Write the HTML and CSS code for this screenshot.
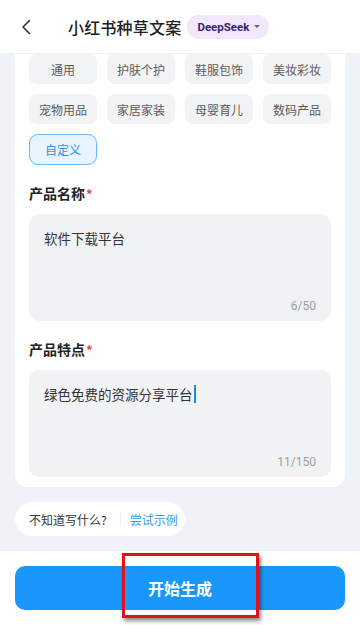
FILE: index.html
```html
<!DOCTYPE html>
<html lang="zh">
<head>
<meta charset="utf-8">
<link rel="stylesheet" href="styles.css">
</head>
<body>
<div class="app">
  <header class="topbar">
    <svg class="back" width="12" height="16" viewBox="0 0 12 16"><path d="M9.5 1.5 L3 8 L9.5 14.5" fill="none" stroke="#333" stroke-width="1.6" stroke-linecap="round" stroke-linejoin="round"/></svg>
    <h1 class="title">小红书种草文案</h1>
    <div class="badge">DeepSeek <span class="caret"></span></div>
  </header>
  <main class="content">
    <section class="card">
      <div class="chips">
        <div class="chip">通用</div>
        <div class="chip">护肤个护</div>
        <div class="chip">鞋服包饰</div>
        <div class="chip">美妆彩妆</div>
        <div class="chip">宠物用品</div>
        <div class="chip">家居家装</div>
        <div class="chip">母婴育儿</div>
        <div class="chip">数码产品</div>
        <div class="chip chip-active">自定义</div>
      </div>
      <div class="label">产品名称<span class="req">*</span></div>
      <div class="field">
        <div class="field-text">软件下载平台</div>
        <div class="count">6/50</div>
      </div>
      <div class="label">产品特点<span class="req">*</span></div>
      <div class="field">
        <div class="field-text">绿色免费的资源分享平台<span class="cursor"></span></div>
        <div class="count">11/150</div>
      </div>
    </section>
    <div class="hint">
      <span class="hint-q">不知道写什么?</span>
      <span class="hint-sep"></span>
      <span class="hint-link">尝试示例</span>
    </div>
  </main>
  <footer class="bottom">
    <button class="go">开始生成</button>
    <div class="mark"></div>
  </footer>
</div>
</body>
</html>
```
FILE: styles.css
```css
* { box-sizing: border-box; }
html, body { margin: 0; padding: 0; }
body {
  font-family: "Noto Sans CJK SC", "Noto Sans", Roboto, sans-serif;
  background: #fff;
  width: 360px;
  height: 625px;
  overflow: hidden;
}
.app { width: 360px; height: 625px; display: flex; flex-direction: column; }
.topbar {
  height: 53px;
  flex: none;
  display: flex;
  align-items: center;
  background: #fff;
  padding-left: 20px;
}
.title {
  margin: 0 0 0 36px;
  font-size: 16px;
  font-weight: 500;
  color: #222;
  letter-spacing: 0.2px;
}
.badge {
  margin-left: 6px;
  height: 24px;
  padding: 0 9px 0 10px;
  border-radius: 12px;
  background: #f1e8fc;
  color: #3b2170;
  font-family: Roboto, "Noto Sans", sans-serif;
  font-weight: 700;
  font-size: 11.5px;
  display: flex;
  align-items: center;
  gap: 5px;
}
.caret {
  width: 0; height: 0;
  border-left: 3px solid transparent;
  border-right: 3px solid transparent;
  border-top: 3.5px solid #6b5a8c;
}
.content {
  flex: none;
  height: 498px;
  background: #eff2f6;
  padding: 1px 15px 0;
  overflow: hidden;
}
.card {
  background: #fff;
  border-radius: 0 0 12px 12px;
  padding: 0 14px 10px;
}
.chips {
  display: grid;
  grid-template-columns: repeat(4, 68px);
  column-gap: 10px;
  row-gap: 10px;
}
.chip {
  height: 30px;
  border-radius: 8px;
  background: #f2f3f5;
  color: #5a5a5a;
  font-size: 12px;
  display: flex;
  align-items: center;
  justify-content: center;
}
.chip-active {
  height: 31px;
  background: #e8f4ff;
  border: 1px solid #6ab6f6;
  color: #2b90ea;
  border-radius: 9px;
}
.label {
  margin-top: 17px;
  font-size: 14px;
  font-weight: 700;
  color: #222;
  line-height: 22px;
}
.req { color: #e8424a; margin-left: 1px; font-size: 13px; }
.field {
  margin-top: 9px;
  height: 107px;
  background: #f1f2f4;
  border-radius: 10px;
  padding: 13px 15px 8px;
  display: flex;
  flex-direction: column;
  justify-content: space-between;
}
.field + .label { margin-top: 17px; }
.field-text {
  font-size: 13.5px;
  color: #333;
  line-height: 22px;
  display: flex;
  align-items: center;
}
.cursor {
  display: inline-block;
  width: 2px;
  height: 18px;
  background: #1e88e5;
  margin-left: 1px;
}
.count {
  align-self: flex-end;
  font-family: Roboto, "Noto Sans", sans-serif;
  font-size: 12px;
  color: #9e9e9e;
  line-height: 14px;
}
.hint {
  margin-top: 15px;
  width: 170px;
  height: 34px;
  border-radius: 17px;
  background: #fff;
  display: flex;
  align-items: center;
  padding-left: 14px;
  font-size: 12px;
}
.hint-q { color: #333; }
.hint-sep {
  width: 1px;
  height: 14px;
  background: #eef2f6;
  margin: 0 9px 0 13px;
}
.hint-link { color: #3c9be8; }
.bottom {
  flex: 1;
  background: #fff;
  padding: 15px 15px 0;
  position: relative;
}
.go {
  width: 330px;
  height: 44px;
  border: none;
  border-radius: 10px;
  background: #1a97fc;
  color: #fff;
  font-family: "Noto Sans CJK SC", sans-serif;
  font-size: 16px;
  font-weight: 700;
  display: flex;
  align-items: center;
  justify-content: center;
  padding: 0;
}
.mark {
  position: absolute;
  left: 122px;
  top: 2px;
  width: 137px;
  height: 65px;
  border: 3px solid #e2121b;
  box-shadow: 2px 3px 4px rgba(0,0,0,0.45);
}
```
